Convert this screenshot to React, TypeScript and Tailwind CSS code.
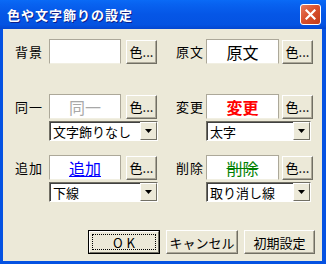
import React from "react";

const JP = { fontFamily: '"Noto Sans CJK JP", "Noto Sans", sans-serif' };

function ColorButton() {
  return (
    <div className="w-[31px] h-[24px] flex items-center justify-center border border-t-white border-l-white border-r-[#716F64] border-b-[#716F64] bg-[#ECE9D8] shadow-[inset_-1px_-1px_0_#ACA899] text-[13px] leading-none text-black pb-[1px]">
      色...
    </div>
  );
}

function Box({ width, children }: { width: number; children?: React.ReactNode }) {
  return (
    <div
      className="h-[25px] bg-white border border-t-[#ACA899] border-l-[#ACA899] border-r-[#ACA899] border-b-[#F1EFE2] flex items-center justify-center text-[16px] leading-none"
      style={{ width }}
    >
      {children}
    </div>
  );
}

function Dropdown({ width, text }: { width: number; text: string }) {
  return (
    <div
      className="h-[20px] bg-white border border-t-[#716F64] border-l-[#716F64] border-r-white border-b-white flex"
      style={{ width }}
    >
      <div className="flex-1 flex items-center pl-[2px] text-[13px] leading-none text-black border-t border-l border-t-[#404040] border-l-[#404040]">
        {text}
      </div>
      <div className="w-[17px] bg-[#ECE9D8] border border-t-white border-l-white border-r-[#716F64] border-b-[#716F64] flex items-center justify-center">
        <svg width="7" height="4" viewBox="0 0 7 4">
          <path d="M0 0H7L3.5 4Z" fill="#000" />
        </svg>
      </div>
    </div>
  );
}

function Cell({
  label,
  labelW,
  boxW,
  gap,
  ddW,
  content,
  dd,
}: {
  label: string;
  labelW: number;
  boxW: number;
  gap: number;
  ddW: number;
  content?: React.ReactNode;
  dd?: string;
}) {
  return (
    <div className="flex flex-col">
      <div className="flex items-center">
        <span className="text-[13px] leading-none text-black tracking-[1px]" style={{ width: labelW }}>
          {label}
        </span>
        <Box width={boxW}>{content}</Box>
        <div style={{ width: gap }} />
        <ColorButton />
      </div>
      {dd && (
        <div className="mt-[2px]" style={{ marginLeft: labelW }}>
          <Dropdown width={ddW} text={dd} />
        </div>
      )}
    </div>
  );
}

function Btn({ children, def, w }: { children: React.ReactNode; def?: boolean; w: number }) {
  if (def) {
    return (
      <div className="h-[24px] border border-black flex" style={{ width: w }}>
        <div className="flex-1 border border-t-white border-l-white border-r-[#716F64] border-b-[#716F64] bg-[#ECE9D8] p-[2px] flex">
          <div className="flex-1 border border-dotted border-black flex items-center justify-center text-[13px] leading-none tracking-[4px] pl-[4px]">
            {children}
          </div>
        </div>
      </div>
    );
  }
  return (
    <div
      className="h-[24px] border border-t-white border-l-white border-r-[#716F64] border-b-[#716F64] bg-[#ECE9D8] shadow-[inset_-1px_-1px_0_#ACA899] flex items-center justify-center text-[13px] leading-none"
      style={{ width: w }}
    >
      {children}
    </div>
  );
}

export default function App() {
  return (
    <div className="w-[326px] h-[264px] flex flex-col bg-[#0552E2] overflow-hidden" style={JP}>
      <div className="h-[29px] flex items-center justify-between pl-[7px] pr-[5px] bg-[linear-gradient(to_bottom,#0A6AF6_0%,#0862F0_15%,#0556E6_50%,#0453E2_85%,#0446D0_100%)]">
        <span className="text-white font-bold text-[13px] tracking-[1px] [text-shadow:1px_1px_0_#0A1E8C]">
          色や文字飾りの設定
        </span>
        <div className="w-[21px] h-[21px] rounded-[3px] border border-white bg-[linear-gradient(135deg,#E87A5E_0%,#D9512E_45%,#C23A18_100%)] flex items-center justify-center">
          <svg width="11" height="11" viewBox="0 0 11 11">
            <path d="M1.5 1.5L9.5 9.5M9.5 1.5L1.5 9.5" stroke="white" strokeWidth="2.2" strokeLinecap="square" />
          </svg>
        </div>
      </div>
      <div className="flex-1 ml-[3px] mr-[4px] mb-[3px] bg-[#ECE9D8] flex flex-col pt-[10px] pl-[12px]">
        <div className="flex">
          <div className="w-[161px]">
            <Cell label="背景" labelW={34} boxW={72} gap={5} ddW={109} />
          </div>
          <Cell
            label="原文"
            labelW={30}
            boxW={73}
            gap={3}
            ddW={105}
            content={<span className="text-black">原文</span>}
          />
        </div>
        <div className="flex mt-[30px]">
          <div className="w-[161px]">
            <Cell
              label="同一"
              labelW={34}
              boxW={72}
              gap={5}
              ddW={109}
              content={<span className="text-[#A8A8A8]">同一</span>}
              dd="文字飾りなし"
            />
          </div>
          <Cell
            label="変更"
            labelW={30}
            boxW={73}
            gap={3}
            ddW={105}
            content={<span className="text-[#FF0000] font-bold">変更</span>}
            dd="太字"
          />
        </div>
        <div className="flex mt-[14px]">
          <div className="w-[161px]">
            <Cell
              label="追加"
              labelW={34}
              boxW={72}
              gap={5}
              ddW={109}
              content={<span className="text-[#0000FF] underline">追加</span>}
              dd="下線"
            />
          </div>
          <Cell
            label="削除"
            labelW={30}
            boxW={73}
            gap={3}
            ddW={105}
            content={<span className="text-[#008000] line-through">削除</span>}
            dd="取り消し線"
          />
        </div>
        <div className="flex mt-[28px] ml-[73px] gap-[6px]">
          <Btn def w={72}>OK</Btn>
          <Btn w={72}>キャンセル</Btn>
          <Btn w={71}>初期設定</Btn>
        </div>
      </div>
    </div>
  );
}
